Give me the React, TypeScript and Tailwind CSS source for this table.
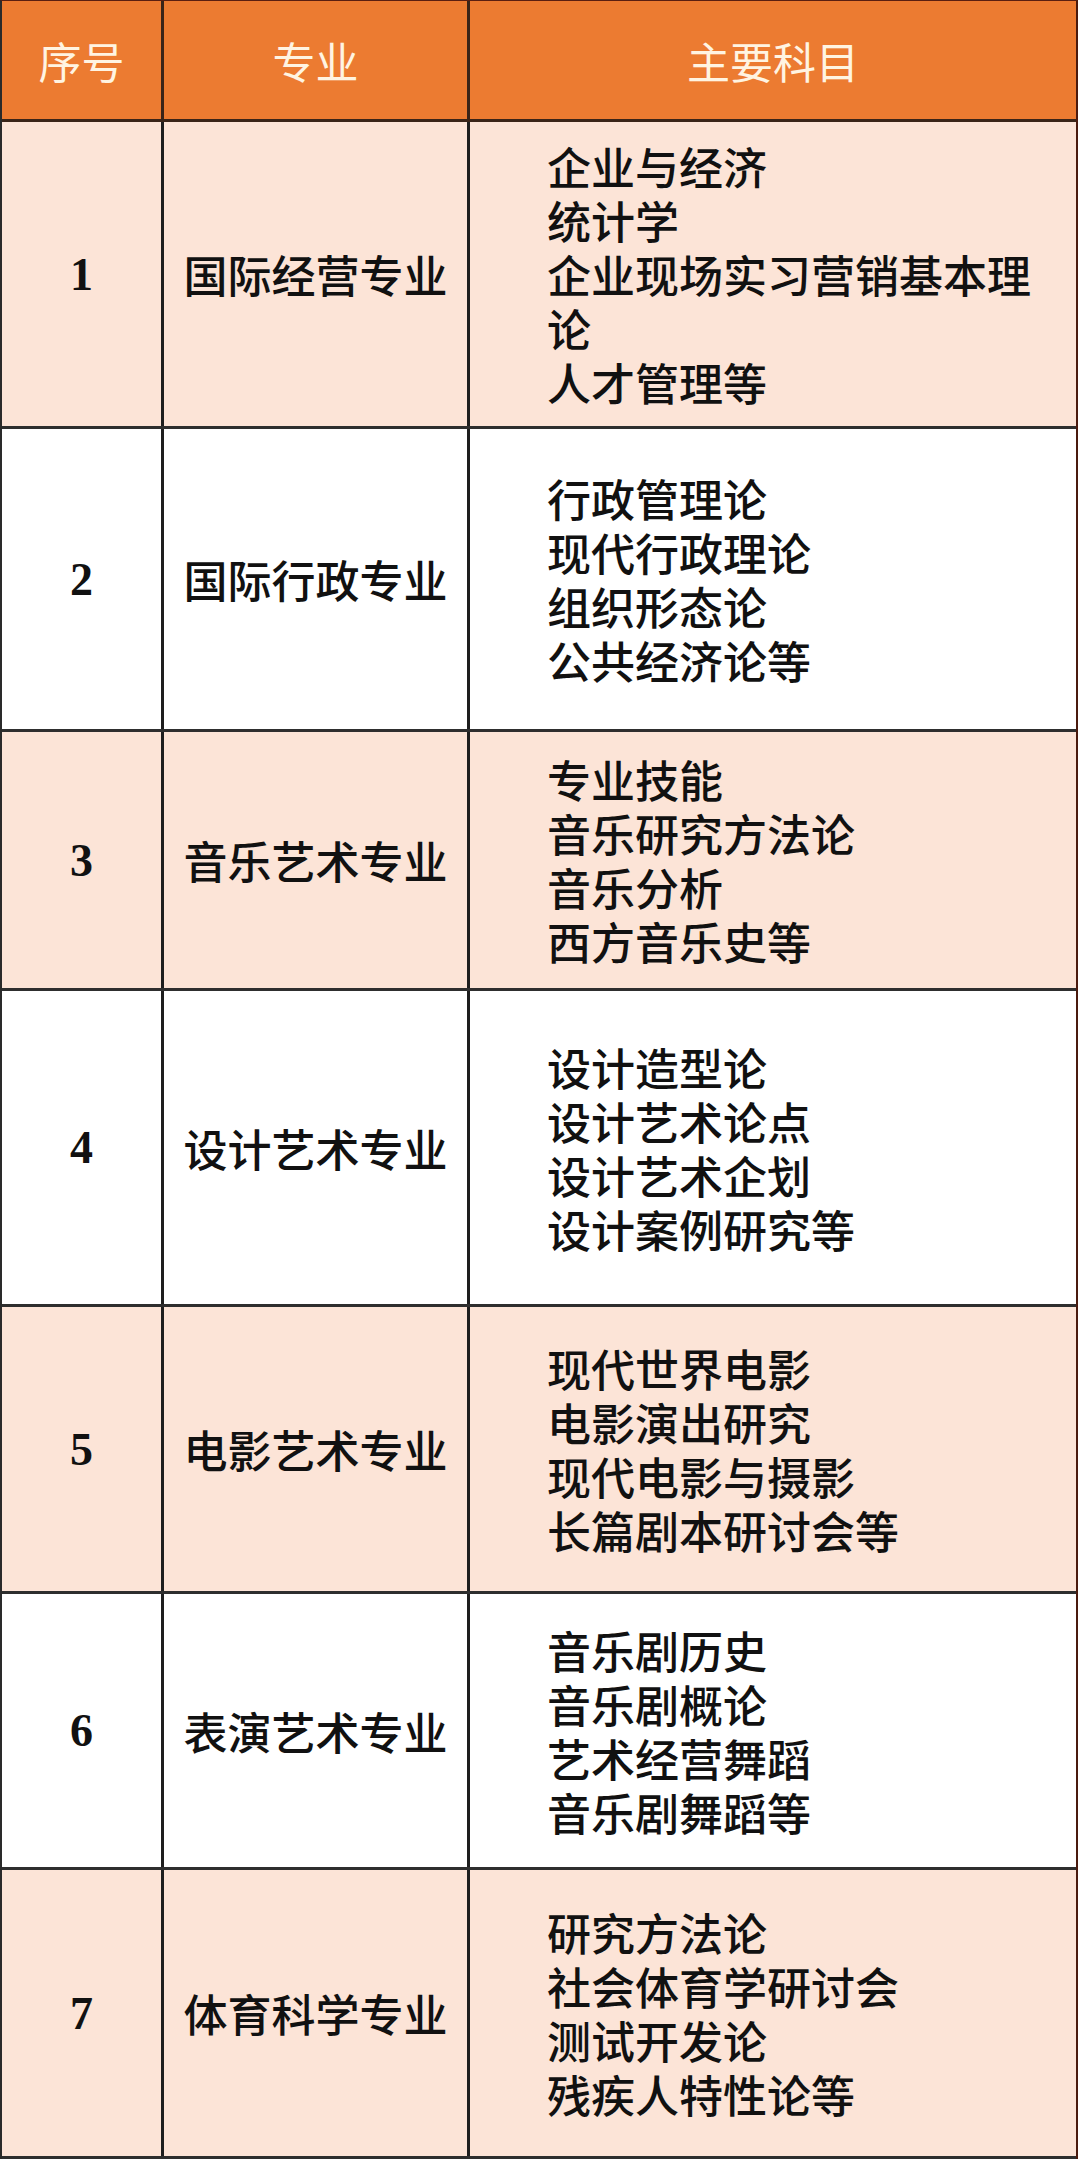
import { Fragment } from "react";

const rows = [
  { no: "1", major: "国际经营专业", subjects: ["企业与经济", "统计学", "企业现场实习营销基本理论", "人才管理等"], h: "h-[307px]", pink: true },
  { no: "2", major: "国际行政专业", subjects: ["行政管理论", "现代行政理论", "组织形态论", "公共经济论等"], h: "h-[303px]", pink: false },
  { no: "3", major: "音乐艺术专业", subjects: ["专业技能", "音乐研究方法论", "音乐分析", "西方音乐史等"], h: "h-[259px]", pink: true },
  { no: "4", major: "设计艺术专业", subjects: ["设计造型论", "设计艺术论点", "设计艺术企划", "设计案例研究等"], h: "h-[316px]", pink: false },
  { no: "5", major: "电影艺术专业", subjects: ["现代世界电影", "电影演出研究", "现代电影与摄影", "长篇剧本研讨会等"], h: "h-[287px]", pink: true },
  { no: "6", major: "表演艺术专业", subjects: ["音乐剧历史", "音乐剧概论", "艺术经营舞蹈", "音乐剧舞蹈等"], h: "h-[276px]", pink: false },
  { no: "7", major: "体育科学专业", subjects: ["研究方法论", "社会体育学研讨会", "测试开发论", "残疾人特性论等"], h: "h-[289px]", pink: true },
];

export default function App() {
  return (
    <div className="min-h-screen w-[1080px] bg-white font-['Noto_Sans_CJK_SC',sans-serif]">
      <div className="w-[1078px] border-l-2 border-r-2 border-t border-l-[#2a2a2a] border-r-[#4a1a0e] border-t-[#5a1e10]">
        <div className="grid h-[121px] grid-cols-[162px_306px_1fr] border-b-[3px] border-[#3a2418] bg-[#ec7b31] text-[43px] text-[#fff4e2]">
          <div className="flex items-center justify-center border-r-[3px] border-[#3a2418]">序号</div>
          <div className="flex items-center justify-center border-r-[3px] border-[#3a2418]">专业</div>
          <div className="flex items-center justify-center">主要科目</div>
        </div>
        {rows.map((r) => (
          <div
            key={r.no}
            className={`grid grid-cols-[162px_306px_1fr] border-b-[3px] border-[#2e2e2e] text-[44px] text-[#111] ${r.h} ${r.pink ? "bg-[#fce4d7]" : "bg-white"}`}
          >
            <div className="flex items-center justify-center border-r-[3px] border-[#1e1e1e] font-['Liberation_Serif',serif] text-[46px] font-bold">
              {r.no}
            </div>
            <div className="flex items-center justify-center border-r-[3px] border-[#1e1e1e] font-medium">{r.major}</div>
            <div className="flex items-center pl-[77px]">
              <p className="w-[500px] font-medium leading-[54px]">
                {r.subjects.map((s, i) => (
                  <Fragment key={s}>
                    {i > 0 && <br />}
                    {s}
                  </Fragment>
                ))}
              </p>
            </div>
          </div>
        ))}
      </div>
    </div>
  );
}
